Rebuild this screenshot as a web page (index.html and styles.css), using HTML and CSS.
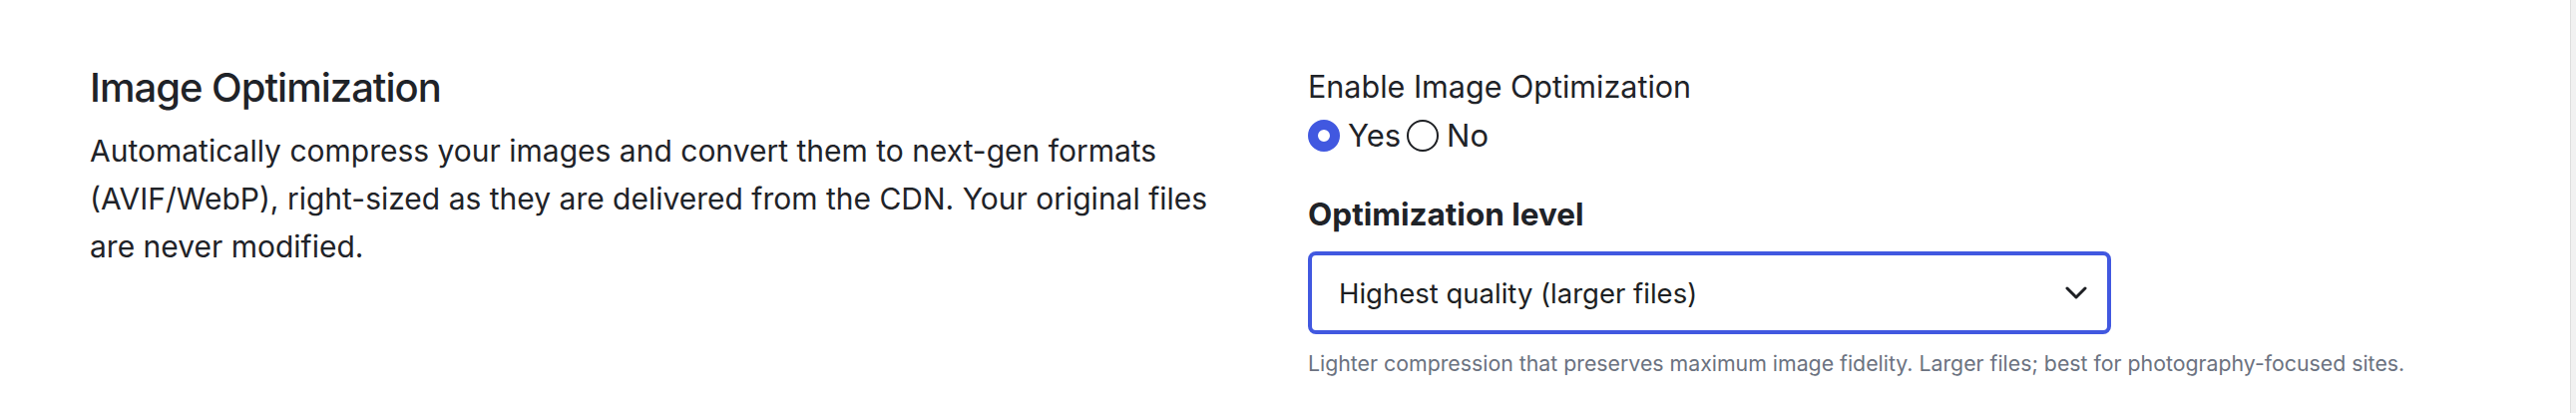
FILE: index.html
```html
<!DOCTYPE html>
<html>
<head>
  <title>Settings | Image Optimization</title>
  <link rel="stylesheet" href="styles.css">
</head>
<body>

  <div class="settings-row">
    <div class="intro">
      <h2>Image Optimization</h2>
      <p>Automatically compress your images and convert them to next-gen formats (AVIF/WebP), right-sized as they are delivered from the CDN. Your original files are never modified.</p>
    </div>

    <div class="fields">
      <div class="field-label">Enable Image Optimization</div>
      <div class="radio-group">
        <label><input type="radio" name="enabled" checked> Yes</label>
        <label><input type="radio" name="enabled"> No</label>
      </div>

      <label class="select-label" for="level">Optimization level</label>
      <div class="select-wrap">
        <select id="level">
          <option>Highest quality (larger files)</option>
          <option>Balanced</option>
          <option>Smallest files (lower quality)</option>
        </select>
        <svg class="chevron" width="22" height="13" viewBox="0 0 22 13">
          <path d="M2 2 L11 11 L20 2" fill="none" stroke="#1d1f23" stroke-width="3" stroke-linecap="round" stroke-linejoin="round"/>
        </svg>
      </div>
      <p class="help">Lighter compression that preserves maximum image fidelity. Larger files; best for photography-focused sites.</p>
    </div>
  </div>

</body>
</html>
```

FILE: styles.css
```css
html, body {
  height: 100%;
}

body {
  margin: 0;
  font-family: Inter, "Noto Sans", sans-serif;
  color: #1f2328;
  background: white;
  box-shadow: inset -5px 0 0 #f1f1f1, inset -6px 0 0 #dedede;
}

.settings-row {
  display: grid;
  grid-template-columns: 1fr 1fr;
  column-gap: 40px;
  padding: 64px 90px 0;
}

.intro h2 {
  margin: 0;
  font-size: 40px;
  line-height: 48px;
  font-weight: 500;
  letter-spacing: -1px;
}

.intro p {
  max-width: 1150px;
  margin: 15px 0 0;
  font-size: 30px;
  line-height: 48px;
}

/* right column */
.fields {
  padding-top: 3px;
}

.field-label {
  font-size: 30.5px;
  line-height: 40px;
}

.radio-group {
  display: flex;
  gap: 6px;
  margin-top: 9px;
  font-size: 31px;
  line-height: 40px;
}

.radio-group label {
  display: flex;
  align-items: center;
  gap: 8px;
}

.radio-group input {
  appearance: none;
  margin: 0;
  width: 32px;
  height: 32px;
  border: 2px solid #1d1f23;
  border-radius: 50%;
  background: white;
}

.radio-group input:checked {
  border: 10px solid #4158e0;
}

.select-label {
  display: block;
  margin-top: 41px;
  font-size: 31.5px;
  line-height: 36px;
  font-weight: 700;
}

.select-wrap {
  position: relative;
  width: 805px;
  margin-top: 19px;
}

.select-wrap select {
  appearance: none;
  width: 100%;
  height: 83px;
  padding: 0 80px 0 27px;
  border: 4px solid #4158e0;
  border-radius: 8px;
  background: white;
  font-family: Inter, "Noto Sans", sans-serif;
  font-size: 27.5px;
  color: #1d1f23;
  outline: none;
}

.chevron {
  position: absolute;
  right: 24px;
  top: 35px;
  pointer-events: none;
}

.help {
  margin: 15px 0 0;
  font-size: 21.3px;
  line-height: 28px;
  color: #6b7280;
}
```
